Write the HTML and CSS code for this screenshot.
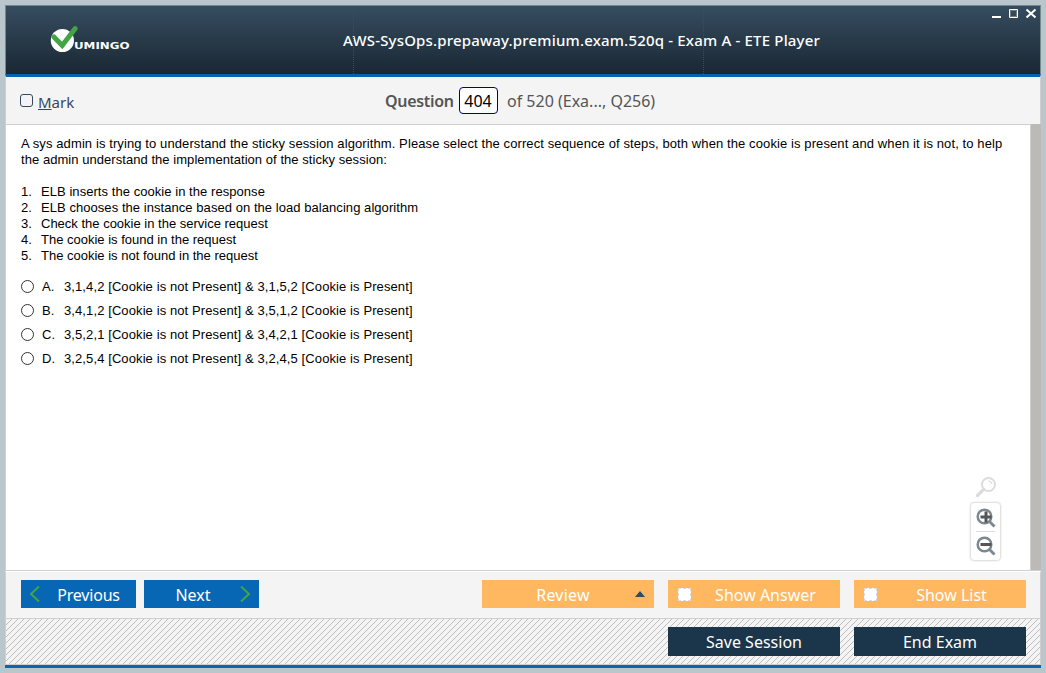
FILE: index.html
```html
<!DOCTYPE html>
<html lang="en">
<head>
<meta charset="utf-8">
<title>ETE Player</title>
<link rel="stylesheet" href="styles.css">
</head>
<body>
<div class="window">
  <header class="titlebar">
    <svg class="logo" width="82" height="30" viewBox="0 0 82 30">
      <circle cx="12.4" cy="15.5" r="11.6" fill="#fff"/>
      <path d="M4 12 L12.2 20.5 L25.2 3.6" fill="none" stroke="#43a443" stroke-width="5" stroke-linecap="round"/>
      <text class="logo-text" x="24" y="24" textLength="55.5" lengthAdjust="spacingAndGlyphs">UMINGO</text>
    </svg>
    <h1 class="title">AWS-SysOps.prepaway.premium.exam.520q - Exam A - ETE Player</h1>
    <svg class="controls" width="46" height="12" viewBox="0 0 46 12">
      <path d="M1 8h9v2H1z" fill="#fff"/>
      <path d="M18.5 1.5h8v8h-8z" fill="none" stroke="#fff"/>
      <path d="M19.5 2.5h6v6h-6z" fill="none" stroke="#777c80"/>
      <path d="M35.5 1.5l9 8M44.5 1.5l-9 8" stroke="#fff" stroke-width="2"/>
    </svg>
  </header>
  <div class="questionbar">
    <label class="mark"><span class="checkbox"></span><span class="mark-text"><u>M</u>ark</span></label>
    <div class="counter"><b class="counter-label">Question</b><span class="number">404</span><span class="total">of 520 (Exa..., Q256)</span></div>
  </div>
  <main class="content">
    <div class="question">
      <p class="prompt"><span class="line first">A sys admin is trying to understand the sticky session algorithm. Please select the correct sequence of steps, both when the cookie is present and when it is not, to help</span><span class="line second">the admin understand the implementation of the sticky session:</span></p>
      <ol class="steps">
        <li class="wide"><span>1.</span>ELB inserts the cookie in the response</li>
        <li class="wide"><span>2.</span>ELB chooses the instance based on the load balancing algorithm</li>
        <li><span>3.</span>Check the cookie in the service request</li>
        <li><span>4.</span>The cookie is found in the request</li>
        <li><span>5.</span>The cookie is not found in the request</li>
      </ol>
      <ul class="answers">
        <li><i class="radio"></i><span>A.</span>3,1,4,2 [Cookie is not Present] &amp; 3,1,5,2 [Cookie is Present]</li>
        <li><i class="radio"></i><span>B.</span>3,4,1,2 [Cookie is not Present] &amp; 3,5,1,2 [Cookie is Present]</li>
        <li><i class="radio"></i><span>C.</span>3,5,2,1 [Cookie is not Present] &amp; 3,4,2,1 [Cookie is Present]</li>
        <li><i class="radio"></i><span>D.</span>3,2,5,4 [Cookie is not Present] &amp; 3,2,4,5 [Cookie is Present]</li>
      </ul>
    </div>
    <div class="zoom">
      <svg width="22" height="22" viewBox="0 0 22 22" fill="none" stroke="#dcdcdc">
        <circle cx="13.5" cy="8.5" r="6.5" stroke-width="2"/><path d="M8.5 13.5l-6 6" stroke-width="3.2" stroke-linecap="round"/><path d="M13.5 5q3 0 3.5 3" stroke-width="1.2"/>
      </svg>
      <div class="zoom-box">
        <svg width="20" height="20" viewBox="0 0 20 20" fill="none"><circle cx="8.5" cy="8.5" r="6.8" stroke="#7b8791" stroke-width="2.5"/><path d="M13.5 13.5l5 5" stroke="#7b8791" stroke-width="2.8"/><path d="M4.5 9h11M10 3.5v11" stroke="#555" stroke-width="3"/></svg>
        <svg width="20" height="20" viewBox="0 0 20 20" fill="none"><circle cx="8.5" cy="8.5" r="6.8" stroke="#7b8791" stroke-width="2.5"/><path d="M13.5 13.5l5 5" stroke="#7b8791" stroke-width="2.8"/><path d="M4.5 8.5h11" stroke="#555" stroke-width="3"/></svg>
      </div>
    </div>
    <div class="scrollbar"></div>
  </main>
  <nav class="actions">
    <button class="btn blue prev"><svg width="12" height="18" viewBox="0 0 12 18"><path d="M10 1.5L2 9l8 7.5" fill="none" stroke="#43a443" stroke-width="2"/></svg><span>Previous</span></button>
    <button class="btn blue next"><span>Next</span><svg width="12" height="18" viewBox="0 0 12 18"><path d="M2 1.5L10 9l-8 7.5" fill="none" stroke="#43a443" stroke-width="2"/></svg></button>
    <div class="options">
      <button class="btn orange review"><span>Review</span><svg width="10" height="6" viewBox="0 0 10 6"><path d="M0 6L5 0l5 6z" fill="#34495e"/></svg></button>
      <button class="btn orange toggle"><i class="dashed"></i><span>Show Answer</span></button>
      <button class="btn orange toggle"><i class="dashed"></i><span>Show List</span></button>
    </div>
  </nav>
  <footer class="session">
    <button class="btn dark">Save Session</button>
    <button class="btn dark">End Exam</button>
  </footer>
</div>
</body>
</html>
```
FILE: styles.css
```css
* { box-sizing: border-box; }
body { margin: 0; width: 1046px; height: 673px; padding: 5px; overflow: hidden; background: #b9c6cc; font-family: "Noto Sans", sans-serif; }
.window { width: 1036px; height: 663px; display: flex; flex-direction: column; }
.window::after { content: ""; height: 3px; background: #0767b5; }

.titlebar { height: 69px; display: grid; grid-template-columns: 348px 348px 1fr; border: 1px solid #758890; border-bottom: 0; background: linear-gradient(#364d60, #1a2733); position: relative; }
.titlebar::before { content: ""; position: absolute; left: 347px; top: 1px; width: 349px; height: 67px; border: dotted #33459a; border-width: 0 1px; }
.logo { margin: 19px 0 0 44px; }
.logo-text { font: bold 9.5px "DejaVu Sans", sans-serif; fill: #fff; }
.title { margin: 0 0 0 -11px; font-size: 15px; font-weight: 500; letter-spacing: 0.18px; line-height: 69px; color: #fff; white-space: nowrap; }
.controls { justify-self: end; margin: 2px 3px 0 0; }

.questionbar { height: 51px; border: 1px solid #cfcfcf; border-top: 3px solid #0363b1; background: #f4f4f4; display: grid; grid-template-columns: 379px 1fr; align-items: center; color: #555; font-size: 16px; }
.mark { display: flex; align-items: center; gap: 5px; margin-left: 14px; color: #34495e; font-size: 15px; line-height: 20px; padding-top: 2px; }
.checkbox { width: 13px; height: 13px; border: 1px solid #34495e; border-radius: 3px; margin-top: -2px; }
.counter { display: flex; align-items: center; white-space: nowrap; }
.counter-label { font-size: 16px; font-weight: 600; letter-spacing: -0.3px; width: 74px; }
.number { width: 39px; height: 27px; border: 1px solid #000080; border-radius: 4px; background: #fff; color: #000; text-align: center; line-height: 27px; font-size: 16px; margin-right: 9px; padding-right: 1px; }

.content { height: 446px; display: grid; grid-template-columns: minmax(0, 1fr) 60px 11px; background: #fff; border-left: 1px solid #cfcfcf; border-bottom: 1px solid #cfcfcf; }
.question { padding: 11px 0 0 15px; font: 13px/16px "Liberation Sans", Arial, sans-serif; color: #000; white-space: nowrap; }
.prompt, .steps, .answers { margin: 0; padding: 0; list-style: none; }
.line { display: block; }
.first { letter-spacing: 0.102px; }
.second { letter-spacing: 0.05px; }
.steps { margin-top: 16px; }
.steps li { display: grid; grid-template-columns: 20px 1fr; }
.steps .wide { letter-spacing: 0.055px; }
.answers { margin-top: 11px; letter-spacing: 0.1px; }
.answers li { display: grid; grid-template-columns: 21px 22px 1fr; align-items: center; height: 24px; }
.radio { width: 13px; height: 13px; border: 1px solid #333; border-radius: 50%; margin-top: -1px; }
.zoom { align-self: end; padding: 0 0 9px; display: flex; flex-direction: column; align-items: center; gap: 4px; width: 31px; }
.zoom-box { width: 31px; height: 59px; border: 1px solid #e2e2e2; border-radius: 4px; display: grid; grid-template-rows: 29px 28px; place-items: center; box-shadow: 0 0 2px #ddd; background: linear-gradient(#ddd, #ddd) 5px 28px/19px 1px no-repeat; }
.scrollbar { margin-top: -1px; border-left: 1px solid #cfcfcf; background: #bbbab6; }

.actions { height: 48px; border: 1px solid #cfcfcf; border-top: 1px solid #fff; background: #f4f4f4; padding: 8px 14px 0 15px; display: flex; gap: 8px; }
.options { display: flex; gap: 14px; margin-left: auto; }
.btn { border: 0; padding: 0; height: 28px; font: 16px/30px "Noto Sans", sans-serif; color: #fff; display: grid; align-items: center; text-align: center; white-space: nowrap; }
.btn span { height: 28px; }
.blue { background: #0767b5; width: 115px; }
.prev { grid-template-columns: 22px 1fr; padding: 0 10px 0 8px; letter-spacing: -0.2px; }
.next { grid-template-columns: 1fr 20px; padding-left: 3px; }
.orange { background: #ffb85f; width: 172px; }
.review { grid-template-columns: 1fr 10px; padding: 0 9px; letter-spacing: 0.2px; }
.toggle { grid-template-columns: 13px 1fr; padding-left: 10px; }
.dashed { width: 13px; height: 13px; background: #fff; border: 1px dashed #d8dce0; }

.session { height: 46px; border: 1px solid #cfcfcf; border-top: 0; display: flex; justify-content: flex-end; gap: 14px; padding: 8px 14px 0 0; background: #f4f4f4 url("data:image/svg+xml,%3Csvg xmlns='http://www.w3.org/2000/svg' width='6' height='6' shape-rendering='crispEdges'%3E%3Cpath d='M5 0h1v1H5zM4 1h1v1H4zM3 2h1v1H3zM2 3h1v1H2zM1 4h1v1H1zM0 5h1v1H0z' fill='%23bdbdbd'/%3E%3C/svg%3E"); }
.dark { width: 172px; height: 29px; background: #1b354a; }
```
